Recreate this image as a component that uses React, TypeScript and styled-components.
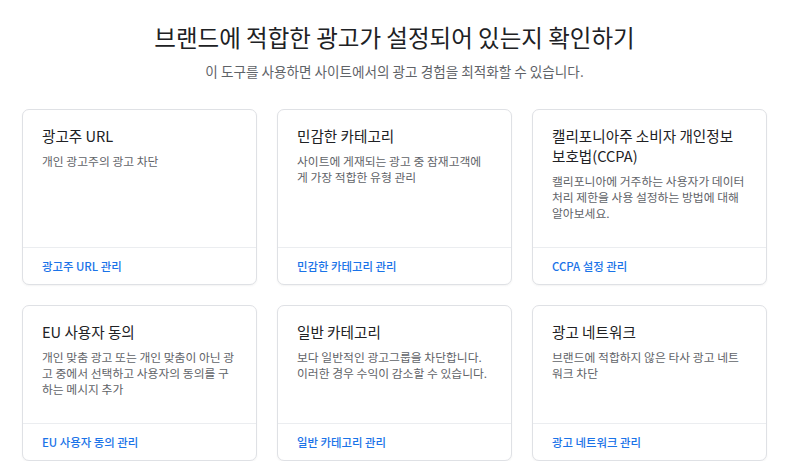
import styled, { createGlobalStyle } from 'styled-components';

// 줄바꿈은 원본 화면과 같게 맞추기 위해 줄 단위로 나눠 둔다.
const cards = [
	{ title: ['광고주 URL'], desc: ['개인 광고주의 광고 차단'], link: '광고주 URL 관리' },
	{ title: ['민감한 카테고리'], desc: ['사이트에 게재되는 광고 중 잠재고객에', '게 가장 적합한 유형 관리'], link: '민감한 카테고리 관리' },
	{
		title: ['캘리포니아주 소비자 개인정보', '보호법(CCPA)'],
		desc: ['캘리포니아에 거주하는 사용자가 데이터', '처리 제한을 사용 설정하는 방법에 대해', '알아보세요.'],
		link: 'CCPA 설정 관리',
	},
	{
		title: ['EU 사용자 동의'],
		desc: ['개인 맞춤 광고 또는 개인 맞춤이 아닌 광', '고 중에서 선택하고 사용자의 동의를 구', '하는 메시지 추가'],
		link: 'EU 사용자 동의 관리',
	},
	{ title: ['일반 카테고리'], desc: ['보다 일반적인 광고그룹을 차단합니다.', '이러한 경우 수익이 감소할 수 있습니다.'], link: '일반 카테고리 관리' },
	{ title: ['광고 네트워크'], desc: ['브랜드에 적합하지 않은 타사 광고 네트', '워크 차단'], link: '광고 네트워크 관리' },
];

export default function App() {
	return (
		<>
			<GlobalStyle />
			<Page>
				<Header>
					<Title>브랜드에 적합한 광고가 설정되어 있는지 확인하기</Title>
					<Subtitle>이 도구를 사용하면 사이트에서의 광고 경험을 최적화할 수 있습니다.</Subtitle>
				</Header>
				<Grid>
					{cards.map((card) => (
						<Card key={card.link}>
							<CardBody>
								<CardTitle>
									{card.title.map((line) => (
										<Line key={line}>{line}</Line>
									))}
								</CardTitle>
								<CardDesc>
									{card.desc.map((line) => (
										<Line key={line}>{line}</Line>
									))}
								</CardDesc>
							</CardBody>
							<CardFooter>
								<CardLink href="#">{card.link}</CardLink>
							</CardFooter>
						</Card>
					))}
				</Grid>
			</Page>
		</>
	);
}

const GlobalStyle = createGlobalStyle`
	body {
		margin: 0;
		background: #ffffff;
		font-family: "Noto Sans CJK KR", "Noto Sans", sans-serif;
		color: #202124;
	}
`;

const Page = styled.div`
	width: 745px;
	margin: 0 22px;
	padding-top: 21px;
`;

const Header = styled.header`
	display: flex;
	flex-direction: column;
	align-items: center;
	margin-bottom: 28px;
`;

const Title = styled.h1`
	margin: 0;
	font-size: 23.5px;
	line-height: 32px;
	font-weight: 400;
	color: #202124;
`;

const Subtitle = styled.p`
	margin: 9px 0 0;
	font-size: 13.6px;
	line-height: 19px;
	color: #5f6368;
`;

const Grid = styled.div`
	display: grid;
	grid-template-columns: repeat(3, 1fr);
	gap: 20px;
`;

const Card = styled.div`
	display: flex;
	flex-direction: column;
	border: 1px solid #dfe1e5;
	border-radius: 7px;
	background: #ffffff;
	box-shadow: 0 1px 2px rgba(60, 64, 67, 0.06);
`;

const CardBody = styled.div`
	flex: 1;
	padding: 16px 18px 26px 19px;
`;

const Line = styled.span`
	display: block;
	white-space: nowrap;
`;

const CardTitle = styled.h3`
	margin: 0;
	font-size: 14.6px;
	line-height: 20px;
	font-weight: 400;
	color: #202124;
`;

const CardDesc = styled.p`
	margin: 7px 0 0;
	font-size: 11.8px;
	line-height: 16px;
	color: #5f6368;
`;

const CardFooter = styled.div`
	display: flex;
	align-items: center;
	height: 36px;
	padding: 0 19px;
	border-top: 1px solid #ebedf0;
`;

const CardLink = styled.a`
	font-size: 11.4px;
	font-weight: 500;
	color: #1a73e8;
	text-decoration: none;
`;
